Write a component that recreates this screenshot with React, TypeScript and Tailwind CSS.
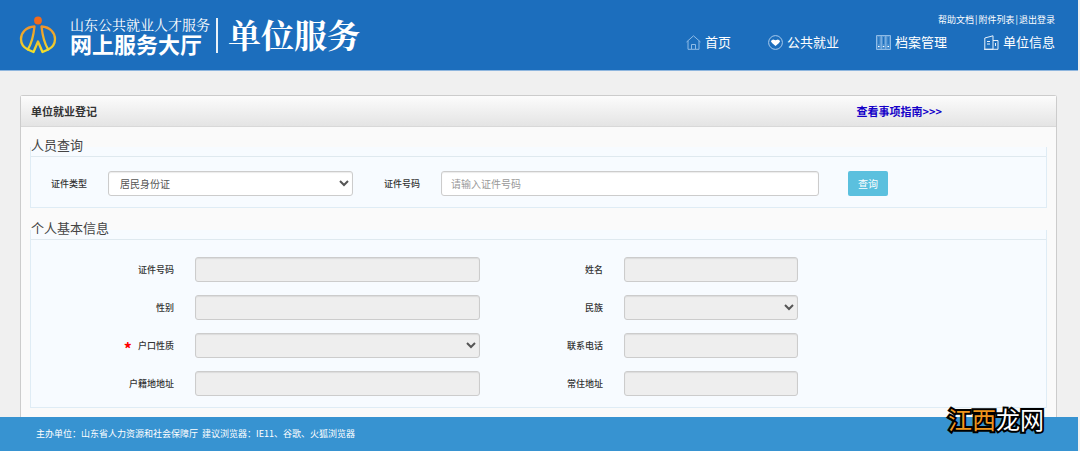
import type { ReactNode } from "react"

const fieldClass =
  "block h-[25px] w-full rounded-[3px] border border-[#ccc] text-[10px] leading-4 text-[#555] shadow-[inset_0_1px_1px_rgba(0,0,0,0.08)]"

const Emblem = () => {
  return (
    <svg width="38" height="40" viewBox="0 0 38 40" fill="none" aria-hidden="true">
      <defs>
        <linearGradient id="emblem" gradientUnits="userSpaceOnUse" x1="0" y1="8" x2="0" y2="38">
          <stop offset="0" stopColor="#f08a2c" />
          <stop offset="0.5" stopColor="#edb52c" />
          <stop offset="1" stopColor="#f2e32c" />
        </linearGradient>
      </defs>
      <circle cx="19" cy="5.5" r="3.9" fill="#f26a1b" />
      <g stroke="url(#emblem)" strokeWidth="2.3" strokeLinejoin="round">
        <path d="M15.5 11.5C6.500 12 2 18 2 24c0 4.800 2.800 8.500 6.800 10.500C12.500 28.500 14.500 21 15.500 11.500z" />
        <path d="M22.500 11.500C31.500 12 36 18 36 24c0 4.800-2.800 8.500-6.800 10.500C25.500 28.500 23.500 21 22.500 11.500z" />
        <path d="M8.800 34.500l5.700 2.500L19 26.500 23.500 37l5.700-2.500" />
      </g>
    </svg>
  )
}

const HomeIcon = () => {
  return (
    <svg width="15" height="15" viewBox="0 0 15 15" fill="none" stroke="#8fbbe6" aria-hidden="true">
      <path d="M.5 7L7.500.8 14.500 7M2 6v8.300h11V6M5.500 14V9.500h4V14" />
    </svg>
  )
}

const HandshakeIcon = () => {
  return (
    <svg width="15" height="15" viewBox="0 0 15 15" fill="none" aria-hidden="true">
      <circle cx="7.500" cy="7.500" r="6.900" stroke="#a9cbed" />
      <path d="M2.800 6l2.200-1.500 2.500.7L10 4.500 12.200 6l-1.200 2-3.500 3L4 8z" fill="#fff" />
    </svg>
  )
}

const ArchiveIcon = () => {
  return (
    <svg width="15" height="15" viewBox="0 0 15 15" fill="none" stroke="#8fbbe6" aria-hidden="true">
      <path d="M.5.500h14v14H.500z" fill="#4a8fd0" />
      <path d="M5.200.500v14M9.800.500v14" />
      <path d="M2.800 2v7M7.500 2v7M12.200 2v7" stroke="#1c6ebd" />
      <path d="M2 11.500h1.500M6.800 11.500h1.500M11.500 11.500H13" stroke="#fff" />
    </svg>
  )
}

const BuildingIcon = () => {
  return (
    <svg width="15" height="15" viewBox="0 0 15 15" fill="none" stroke="#e6f1fb" aria-hidden="true">
      <path d="M.8 14.300V3L9 .8v13.500zM9 5.500h5v8.800H0M3 6.500h3M3 9h3M11.500 8v3" />
    </svg>
  )
}

const navItems = [
  { label: "首页", icon: <HomeIcon /> },
  { label: "公共就业", icon: <HandshakeIcon /> },
  { label: "档案管理", icon: <ArchiveIcon /> },
  { label: "单位信息", icon: <BuildingIcon /> },
]

const topLinks = ["帮助文档", "附件列表", "退出登录"]

const Header = () => {
  return (
    <header className="mr-0.5 flex h-[71px] justify-between border-b border-[#8fb6de] bg-[#1c6ebd] pr-[23px] pl-[19px] text-white">
      <div className="flex items-center">
        <Emblem />
        <div className="ml-[13px] flex flex-col">
          <span className="font-['Noto_Serif_CJK_SC','Noto_Sans_CJK_SC',serif] text-[14px] leading-4">
            山东公共就业人才服务
          </span>
          <span className="text-[22px] leading-[22px] font-bold">网上服务大厅</span>
        </div>
        <div className="ml-1.5 h-[35px] w-0.5 bg-white/90" />
        <h1 className="ml-2.5 pb-0.5 font-['Noto_Serif_CJK_SC','Noto_Sans_CJK_SC',serif] text-[33px] leading-9 font-bold">
          单位服务
        </h1>
      </div>
      <div className="flex flex-col items-end pt-3.5">
        <div className="flex gap-px text-[9px] leading-3">
          {topLinks.map((link, i) => (
            <span key={link} className="flex gap-px">
              {i > 0 && <span>|</span>}
              <a href="#">{link}</a>
            </span>
          ))}
        </div>
        <nav className="mt-1.5 flex gap-[37px]">
          {navItems.map((item) => (
            <a key={item.label} href="#" className="flex items-center gap-1 text-[13px] leading-5">
              {item.icon}
              {item.label}
            </a>
          ))}
        </nav>
      </div>
    </header>
  )
}

type SectionProps = { title: string; children: ReactNode }

const Section = ({ title, children }: SectionProps) => {
  return (
    <fieldset className="min-w-0 border border-[#dfecf5] bg-[#f7fbff]">
      <legend className="h-5 w-full border-b border-[#dfe9ef] text-[13px] leading-4 text-[#444]">{title}</legend>
      {children}
    </fieldset>
  )
}

type LabelProps = { htmlFor: string; required?: boolean; children: ReactNode }

const Label = ({ htmlFor, required, children }: LabelProps) => {
  return (
    <label htmlFor={htmlFor} className="flex items-center justify-end pr-[21px] text-[9px] leading-3 font-medium text-[#333]">
      {required && <span className="mr-1.5 pt-1 text-[16px] font-bold text-[#f00]">*</span>}
      {children}
    </label>
  )
}

const rows = [
  [
    { id: "card-no", label: "证件号码" },
    { id: "name", label: "姓名" },
  ],
  [
    { id: "gender", label: "性别" },
    { id: "nation", label: "民族", select: true },
  ],
  [
    { id: "household", label: "户口性质", select: true, required: true },
    { id: "phone", label: "联系电话" },
  ],
  [
    { id: "household-address", label: "户籍地地址" },
    { id: "address", label: "常住地址" },
  ],
]

const InfoRow = ({ fields }: { fields: (typeof rows)[number] }) => {
  return (
    <div className="grid grid-cols-[164fr_285fr_144fr_174fr_248fr]">
      {fields.map((field) => (
        <div key={field.id} className="contents">
          <Label htmlFor={field.id} required={"required" in field}>
            {field.label}
          </Label>
          {"select" in field ? (
            <select id={field.id} disabled className={`${fieldClass} bg-[#eee] opacity-100`} />
          ) : (
            <input id={field.id} type="text" disabled className={`${fieldClass} bg-[#eee] px-2`} />
          )}
        </div>
      ))}
    </div>
  )
}

const App = () => {
  return (
    <div className="relative flex min-h-screen flex-col bg-[#f0f0f0] font-['Noto_Sans_CJK_SC',sans-serif]">
      <Header />
      <main className="mt-6 mr-[23px] ml-5 flex-1 rounded-t-[3px] border border-b-0 border-[#ccc] bg-[#fafafa] pb-[9px]">
        <div className="flex h-[31px] items-center justify-between border-b border-[#d8d8d8] bg-linear-to-b from-[#fcfcfc] to-[#e4e4e4] pr-[114px] pl-2.5 text-[11px] font-bold">
          <h2 className="text-[#333]">单位就业登记</h2>
          <a href="#" className="text-[#1400c8]">查看事项指南&gt;&gt;&gt;</a>
        </div>
        <div className="flex flex-col gap-3 px-[9px] pt-2.5">
          <Section title="人员查询">
            <form className="grid grid-cols-[77fr_245fr_88fr_378fr_227fr] pt-3.5 pb-[11px]">
              <Label htmlFor="query-type">证件类型</Label>
              <select id="query-type" className={`${fieldClass} bg-white pl-[7px]`}>
                <option>居民身份证</option>
              </select>
              <Label htmlFor="query-no">证件号码</Label>
              <input
                id="query-no"
                type="text"
                placeholder="请输入证件号码"
                className={`${fieldClass} bg-white px-[9px] placeholder:text-[#999]`}
              />
              <div className="pl-[29px]">
                <button type="button" className="block h-[25px] w-10 rounded-[2px] bg-[#5bc0de] text-[10px] leading-4 text-white">
                  查询
                </button>
              </div>
            </form>
          </Section>
          <Section title="个人基本信息">
            <div className="flex flex-col gap-[13px] pt-[17px] pb-[11px]">
              {rows.map((fields) => (
                <InfoRow key={fields[0].id} fields={fields} />
              ))}
            </div>
          </Section>
        </div>
      </main>
      <footer className="mr-0.5 flex h-[34px] items-center gap-1 bg-[#3793d1] pl-9 text-[9px] text-white">
        <span>主办单位：山东省人力资源和社会保障厅</span>
        <span>建议浏览器：IE11、谷歌、火狐浏览器</span>
      </footer>
      <div className="absolute right-9 bottom-4 text-[24px] leading-8 text-white [-webkit-text-stroke:4px_#000] [paint-order:stroke_fill]">
        <span className="text-[#f0961e]">江西</span>龙网
      </div>
    </div>
  )
}

export default App
